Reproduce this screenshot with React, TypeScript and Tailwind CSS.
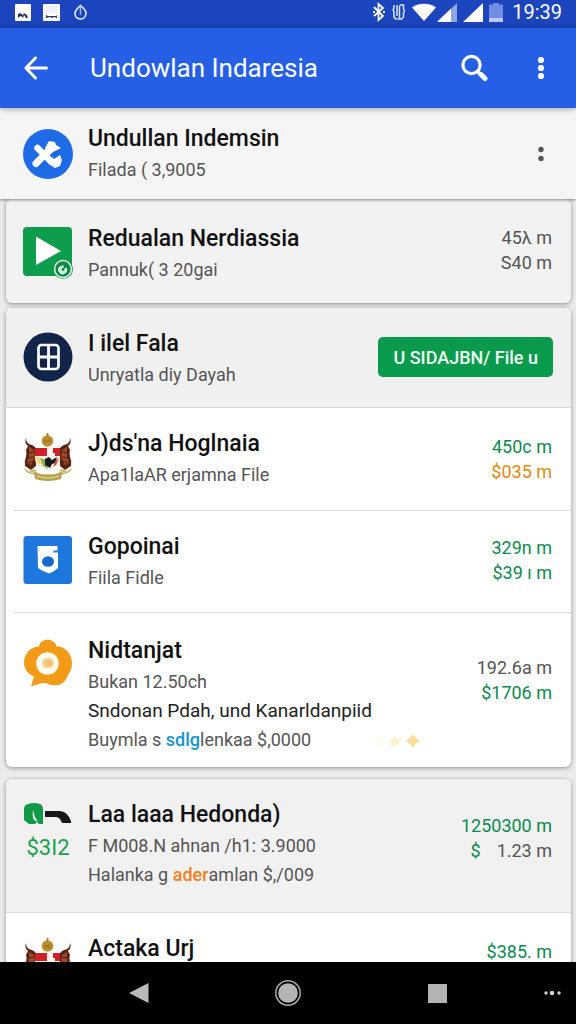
import React from "react";

type Line = { text: React.ReactNode; tone?: string };

const GREEN = "text-[#0c8a4e]";
const GRAY = "text-[#555555]";

function StatusBar() {
  return (
    <div className="flex h-7 items-center justify-between bg-[#1c44bd] pr-[14px] pl-[15px] pb-1 text-white">
      <div className="flex items-center gap-[11px]">
        <svg viewBox="0 0 17 17" className="size-[17px]" aria-hidden="true">
          <rect width="16" height="17" rx="1" fill="#fff" />
          <path d="M3 14V10l2-1 3 2 1-2 3 2 1 3h-2l-2-3-1 3-2-2-2 1z" fill="#24366f" />
        </svg>
        <svg viewBox="0 0 17 17" className="size-[17px]" aria-hidden="true">
          <rect width="17" height="17" rx="1" fill="#fff" />
          <path d="M2 2h12v7H2z" fill="#eef1f5" />
          <path d="M3 14v-3l2 1h8l1-1v3l-3-1-2 1-2-1z" fill="#24366f" />
        </svg>
        <svg viewBox="0 0 20 17" className="h-[17px] w-5" aria-hidden="true">
          <path d="M9.500 1.500C12 4 15.500 6 15 9.500c-.3 3.500-3 5.500-5.500 5.500-3 0-5.500-2-5.500-5.500C4 6 7 4 9.500 1.500z" fill="none" stroke="#dce8ff" strokeWidth="1.700" />
          <path d="M9.500 3v8" stroke="#8fb0f5" strokeWidth="1.500" />
        </svg>
      </div>
      <div className="flex items-center gap-[5px]">
        <svg viewBox="0 0 14 20" className="h-5 w-[14px]" fill="none" stroke="#fff" strokeWidth="1.800" aria-hidden="true">
          <path d="M2 5l9 9-4.500 4V2L11 6l-9 8" />
          <path d="M1 10h2M11 10h2" />
        </svg>
        <svg viewBox="0 0 16 20" className="h-5 w-4" fill="none" stroke="#dce6ff" strokeWidth="1.500" aria-hidden="true">
          <path d="M3 3v3l-1 2 1 2v4q0 3 3 3M6 3v11M8.500 4v12M8.500 3h4v4l1 2-1 2v4l-2 2h-4" />
        </svg>
        <svg viewBox="0 0 24 20" className="-mr-1 h-5 w-6" aria-hidden="true">
          <path d="M0 5.500C6 .5 18 .5 24 5.500L12 19z" fill="#fff" />
        </svg>
        <svg viewBox="0 0 21 20" className="h-5 w-[21px]" aria-hidden="true">
          <path d="M0 20L20 1v19z" fill="#8ea6e6" />
          <path d="M0 20L14 6.500V20z" fill="#fff" />
        </svg>
        <svg viewBox="0 0 21 20" className="h-5 w-[21px]" aria-hidden="true">
          <path d="M0 20L20 1v19z" fill="#fff" />
        </svg>
        <svg viewBox="0 0 14 20" className="h-5 w-[14px]" aria-hidden="true">
          <path d="M0 2.500h4V1h6v1.500h4V20H0z" fill="#6f8ce6" />
          <path d="M0 16h14v4H0z" fill="#b9c8f6" />
        </svg>
        <time className="ml-1 text-[20px] leading-6">19:39</time>
      </div>
    </div>
  );
}

function AppBar() {
  return (
    <header className="relative z-20 flex h-20 items-center bg-[#245fe6] pr-[15px] pl-4 text-white shadow-[0_1px_6px_rgba(0,0,0,0.35)]">
      <button type="button" aria-label="Back" className="flex size-10 items-center justify-center">
        <svg viewBox="0 0 24 24" className="size-6" fill="none" stroke="#fff" strokeWidth="3" strokeLinecap="round" strokeLinejoin="round" aria-hidden="true">
          <path d="M22.500 12H2.500M11.500 2L2 12l9.500 10" />
        </svg>
      </button>
      <h1 className="ml-[34px] flex-1 text-[26px] leading-8 whitespace-nowrap">Undowlan Indaresia</h1>
      <button type="button" aria-label="Search" className="flex size-10 items-center justify-center">
        <svg viewBox="0 0 28 28" className="size-7" fill="none" stroke="#fff" strokeLinecap="round" aria-hidden="true">
          <circle cx="11.500" cy="11" r="8.600" strokeWidth="3.200" />
          <path d="M17.500 17.500l3 3" strokeWidth="3.500" />
          <path d="M21 20.500l4 4" strokeWidth="5" />
        </svg>
      </button>
      <button type="button" aria-label="More options" className="ml-[27px] flex size-10 items-center justify-center">
        <svg viewBox="0 0 8 24" className="h-6 w-2" fill="#fff" aria-hidden="true">
          <circle cx="4" cy="4" r="3.100" />
          <circle cx="4" cy="12" r="3.100" />
          <circle cx="4" cy="20" r="3.100" />
        </svg>
      </button>
    </header>
  );
}

function CrossIcon() {
  return (
    <svg viewBox="0 0 50 50" className="size-[50px]" aria-hidden="true">
      <circle cx="25" cy="25" r="25" fill="#1e6be8" />
      <path d="M14.500 19l14 14" stroke="#fff" strokeWidth="6.500" strokeLinecap="round" />
      <path d="M13 34.500L29 18" stroke="#fff" strokeWidth="7" strokeLinecap="round" />
      <path d="M22 19l4-7 6 1 1 3 5 3-8 4-4 4z" fill="#fff" />
      <path d="M25 27l4 1 2 2 6-4 2 5-2 6-5 2-6-4z" fill="#fff" />
      <path d="M28.500 27q5-1 7.500-4" stroke="#1e6be8" strokeWidth="1.500" fill="none" />
    </svg>
  );
}

function PlayIcon() {
  return (
    <svg viewBox="0 0 50 52" className="h-[52px] w-[50px]" aria-hidden="true">
      <rect width="49" height="49" rx="4" fill="#0d9d4c" />
      <path d="M13 9.500L38 24 13 38z" fill="#fff" />
      <circle cx="40" cy="42" r="10" fill="#0d9d4c" />
      <circle cx="40" cy="42" r="8.400" fill="#0b8846" stroke="#e7f6ec" strokeWidth="1.500" />
      <path d="M36.500 39.500a4.500 4.500 0 1 0 7 1l-3 1.500v-4" fill="#d5f1df" />
      <circle cx="40" cy="42.500" r="1.400" fill="#0b8846" />
    </svg>
  );
}

function WindowIcon() {
  return (
    <svg viewBox="0 0 50 50" className="size-[50px]" aria-hidden="true">
      <circle cx="25" cy="25" r="24.500" fill="#13244a" />
      <rect x="15.500" y="13" width="20" height="24" rx="3" fill="none" stroke="#fff" strokeWidth="2.700" />
      <path d="M25.500 12v25M15 25h21" stroke="#fff" strokeWidth="2.800" />
    </svg>
  );
}

function CrestIcon() {
  return (
    <svg viewBox="0 0 50 50" className="size-[50px]" aria-hidden="true">
      <path d="M3 6q0 6 6 7 5 2 5 8l-1 13-5 4-6-4q-1-5 1-9 1-4 0-7l2-4Q1 11 3 6z" fill="#5a2415" />
      <path d="M47 6q0 6-6 7-5 2-5 8l1 13 5 4 6-4q1-5-1-9-1-4 0-7l-2-4q4-3 2-8z" fill="#5a2415" />
      <path d="M6 15l5 3 1 7-4 8-4-2 2-7zM44 15l-5 3-1 7 4 8 4-2-2-7z" fill="#9a4a28" />
      <path d="M5 21l6-1M4 26l7-1M5 31l5-2M45 21l-6-1M46 26l-7-1M45 31l-5-2" stroke="#3a1810" strokeWidth=".8" />
      <path d="M12 16h25v10c0 7-5 11-12.500 13C17 37 12 33 12 26z" fill="#f6f1e7" />
      <path d="M12 16h12v8H12zM30 16h7v8h-7z" fill="#cf2028" />
      <path d="M24 20h2v-3h3v4h3v4h-8z" fill="#fff4f2" />
      <path d="M17 26l6 2 2 9-5-3z" fill="#87ad4c" />
      <path d="M12 25l5 1 3 7-5-2z" fill="#f0d770" />
      <path d="M22 27l4-2 3 3 5-3-2 6-3 1-2 4-5-3z" fill="#191919" />
      <path d="M33 28l3-2-3 7-3 2z" fill="#d2473a" />
      <circle cx="24.500" cy="9" r="5.800" fill="#bf9030" />
      <path d="M24.500 1v4" stroke="#a67c22" strokeWidth="1.800" />
      <path d="M20 9h9M21 6l7 6M28 6l-7 6" stroke="#94701f" strokeWidth=".8" />
      <path d="M1 36q5 5 11 1l2 4q11 3 22 0l2-4q6 4 11-1-2 6-10 6l-1 5q-13 4-26 0l-1-5Q3 42 1 36z" fill="#b8a34f" />
      <path d="M14 44q11 4 22 0M3 38q6 4 10 1M47 38q-6 4-10 1" stroke="#e8dca0" strokeWidth="1.200" fill="none" />
    </svg>
  );
}

function BadgeIcon() {
  return (
    <svg viewBox="0 0 50 50" className="size-[50px]" aria-hidden="true">
      <rect x=".5" y="1" width="48.500" height="48" rx="3" fill="#1e78dc" />
      <path d="M14.500 11h20v4.500h-4v2h4.500V33l-4 3-5 2.500-6-2.500-5-3z" fill="#fff" />
      <ellipse cx="25" cy="26.500" rx="6" ry="5.300" fill="#1668cc" />
    </svg>
  );
}

function BubbleIcon() {
  return (
    <svg viewBox="0 0 50 50" className="size-[50px]" aria-hidden="true">
      <path d="M16 7.500c1-9 16-9 17.500 0C42 7 49 15 49 24c0 7-3 10-5 14-2 6-8 9-14 8-4 0-6-2-9-2-4 0-8 2-13 3.500l3-10C5 35 1 30 1 24 1 15 7 8 16 7.500z" fill="#f39a16" />
      <circle cx="24.500" cy="24.500" r="11.300" fill="#fffbee" />
      <ellipse cx="25" cy="24" rx="6" ry="5.200" fill="#f9cf8d" />
      <ellipse cx="26" cy="24" rx="3" ry="3" fill="#f5bd72" />
    </svg>
  );
}

function TapIcon() {
  return (
    <div className="flex flex-col items-center">
      <svg viewBox="0 0 50 24" className="h-6 w-[50px]" aria-hidden="true">
        <path d="M5 1q6-2 12 0 3 1 3 6v14h-4l-2-2-2 2H6l-5-4V6q0-4 4-5z" fill="#119a46" />
        <path d="M10 7q-1 6 1 10l4 2-3-5z" fill="#e5f6eb" />
        <path d="M22 8h15q7 0 11 10v2h-9q-2-6-6-6H22z" fill="#171719" />
      </svg>
      <span className="mt-[9px] text-[22px] leading-6 text-[#16a34a]">$3I2</span>
    </div>
  );
}

type RowProps = {
  icon: React.ReactNode;
  title: string;
  lines?: Line[];
  amounts?: Line[];
  amountClass?: string;
  className?: string;
  children?: React.ReactNode;
};

function Row({ icon, title, lines = [], amounts = [], amountClass = "mt-1", className = "pt-5", children }: RowProps) {
  return (
    <li className={`flex shrink-0 items-start pr-[19px] pl-[17px] ${className}`}>
      <div className="mt-1 w-[50px] shrink-0">{icon}</div>
      <div className="ml-[15px] min-w-0 flex-1 whitespace-nowrap">
        <h2 className="text-[23px] leading-8 font-medium text-[#111111]">{title}</h2>
        {lines.map((line, i) => (
          <p key={i} className={`leading-[29px] ${line.tone ?? `text-[18px] ${GRAY}`}`}>
            {line.text}
          </p>
        ))}
      </div>
      {amounts.length > 0 && (
        <div className={`shrink-0 text-right text-[18px] leading-[25px] whitespace-nowrap ${amountClass}`}>
          {amounts.map((amount, i) => (
            <p key={i} className={amount.tone ?? GRAY}>
              {amount.text}
            </p>
          ))}
        </div>
      )}
      {children}
    </li>
  );
}

function Sparkles() {
  return (
    <svg viewBox="0 0 50 16" className="ml-[61px] inline-block h-4 w-[50px]" aria-hidden="true">
      <path d="M7 3l2 3 4 2-4 2-2 4-2-4-4-2 4-2z" fill="#fffaea" />
      <path d="M23 2l2 4 5 1-4 3 1 4-4-2-4 2 1-4-4-3 5-1z" fill="#fff1cf" />
      <path d="M41 1l3 4 4 3-5 3-2 4-3-4-4-3 4-3z" fill="#fbdd96" />
    </svg>
  );
}

function NavBar() {
  return (
    <nav className="z-20 grid h-[62px] shrink-0 grid-cols-[1fr_auto_1fr] items-center bg-black">
      <div className="col-start-2 flex gap-[101px]">
        <button type="button" aria-label="Back" className="flex size-12 items-center justify-center">
          <svg viewBox="0 0 20 22" className="h-[22px] w-5" aria-hidden="true">
            <path d="M0 11L19.500 1v20z" fill="#b9b9b9" />
          </svg>
        </button>
        <button type="button" aria-label="Home" className="flex size-12 items-center justify-center">
          <svg viewBox="0 0 28 28" className="size-7" aria-hidden="true">
            <circle cx="14" cy="14" r="12.200" fill="none" stroke="#a9a9a9" strokeWidth="1.500" />
            <circle cx="14" cy="14" r="9.800" fill="#b5b5b5" />
          </svg>
        </button>
        <button type="button" aria-label="Recent apps" className="flex size-12 items-center justify-center">
          <span className="size-[19px] bg-[#b3b3b3]" />
        </button>
      </div>
      <button type="button" aria-label="More" className="mr-[10px] flex h-10 items-center justify-self-end px-1">
        <svg viewBox="0 0 20 8" className="h-2 w-5" fill="#cfcfcf" aria-hidden="true">
          <circle cx="4" cy="4" r="1.700" />
          <circle cx="10" cy="4" r="2.300" />
          <circle cx="17" cy="4" r="1.700" />
        </svg>
      </button>
    </nav>
  );
}

export default function App() {
  const card = "mr-[5px] ml-[6px] overflow-hidden rounded-md shadow-[0_1px_4px_rgba(0,0,0,0.4)]";
  return (
    <div className="flex h-screen flex-col overflow-hidden bg-[#ebebec] font-[Roboto,sans-serif]">
      <StatusBar />
      <AppBar />
      <main className="min-h-0 flex-1 overflow-hidden">
        <section className="relative z-10 flex h-[91px] items-center bg-[#f5f5f5] pr-[15px] pl-[23px] shadow-[0_1px_3px_rgba(0,0,0,0.45)]">
          <CrossIcon />
          <div className="ml-[15px] flex-1">
            <h2 className="text-[23px] leading-8 font-medium text-[#111111]">Undullan Indemsin</h2>
            <p className={`text-[18px] leading-[29px] ${GRAY}`}>Filada ( 3,9005</p>
          </div>
          <button type="button" aria-label="Item options" className="flex size-10 items-center justify-center">
            <svg viewBox="0 0 8 16" className="h-4 w-2" fill="#555" aria-hidden="true">
              <circle cx="4" cy="3.500" r="2.700" />
              <circle cx="4" cy="12.500" r="2.700" />
            </svg>
          </button>
        </section>

        <ul className={`${card} bg-[#f2f2f2]`}>
          <Row
            className="h-[104px] pt-6"
            icon={<PlayIcon />}
            title="Redualan Nerdiassia"
            lines={[{ text: "Pannuk( 3 20gai" }]}
            amounts={[{ text: "45λ m" }, { text: "S40 m" }]}
            amountClass="mt-[2px]"
          />
        </ul>

        <ul className={`${card} mt-[5px] bg-white`}>
          <Row
            className="h-[100px] border-b border-[#d9d9d9] bg-[#f0f0f0] pt-5"
            icon={<WindowIcon />}
            title="I ilel Fala"
            lines={[{ text: "Unryatla diy Dayah" }]}
          >
            <button type="button" className="mt-[9px] -mr-px h-10 rounded-[5px] bg-[#0a9a4e] px-[15px] text-[18px] font-medium whitespace-nowrap text-[#effff4]">
              U SIDAJBN/ File u
            </button>
          </Row>
          <Row
            className="h-[102px] pt-5"
            icon={<CrestIcon />}
            title="J)ds'na Hoglnaia"
            lines={[{ text: "Apa1laAR erjamna File" }]}
            amounts={[{ text: "450c m", tone: GREEN }, { text: "$035 m", tone: "text-[#e58a0c]" }]}
            amountClass="mt-[6px]"
          />
          <li className="ml-2 h-px bg-[#d9d9d9]" aria-hidden="true" />
          <Row
            className="h-[101px] pt-5"
            icon={<BadgeIcon />}
            title="Gopoinai"
            lines={[{ text: "Fiila Fidle" }]}
            amounts={[{ text: "329n m", tone: GREEN }, { text: "$39 ı m", tone: GREEN }]}
          />
          <li className="ml-2 h-px bg-[#d9d9d9]" aria-hidden="true" />
          <Row
            className="h-[154px] pt-[22px]"
            icon={<BubbleIcon />}
            title="Nidtanjat"
            lines={[
              { text: "Bukan 12.50ch" },
              { text: "Sndonan Pdah, und Kanarldanpiid", tone: "text-[19px] text-[#222222]" },
              {
                text: (
                  <>
                    Buymla s <span className="font-medium text-[#1496cf]">sdlg</span>lenkaa $,0000
                    <Sparkles />
                  </>
                ),
              },
            ]}
            amounts={[{ text: "192.6a m" }, { text: "$1706 m", tone: GREEN }]}
            amountClass="mt-5"
          />
        </ul>

        <ul className={`${card} mt-3 bg-white`}>
          <Row
            className="h-[134px] border-b border-[#d9d9d9] bg-[#f1f1f1] pt-5"
            icon={<TapIcon />}
            title="Laa laaa Hedonda)"
            lines={[
              { text: "F M008.N ahnan /h1: 3.9000" },
              {
                text: (
                  <>
                    Halanka g <span className="font-medium text-[#f58220]">ader</span>amlan $,/009
                  </>
                ),
              },
            ]}
            amounts={[
              { text: "1250300 m", tone: GREEN },
              {
                text: (
                  <>
                    <span className={`mr-4 ${GREEN}`}>$</span>1.23 m
                  </>
                ),
              },
            ]}
            amountClass="mt-[14px]"
          />
          <Row
            className="h-[103px] pt-5"
            icon={<CrestIcon />}
            title="Actaka Urj"
            amounts={[{ text: "$385. m", tone: GREEN }]}
            amountClass="mt-[6px]"
          />
        </ul>
      </main>
      <NavBar />
    </div>
  );
}
